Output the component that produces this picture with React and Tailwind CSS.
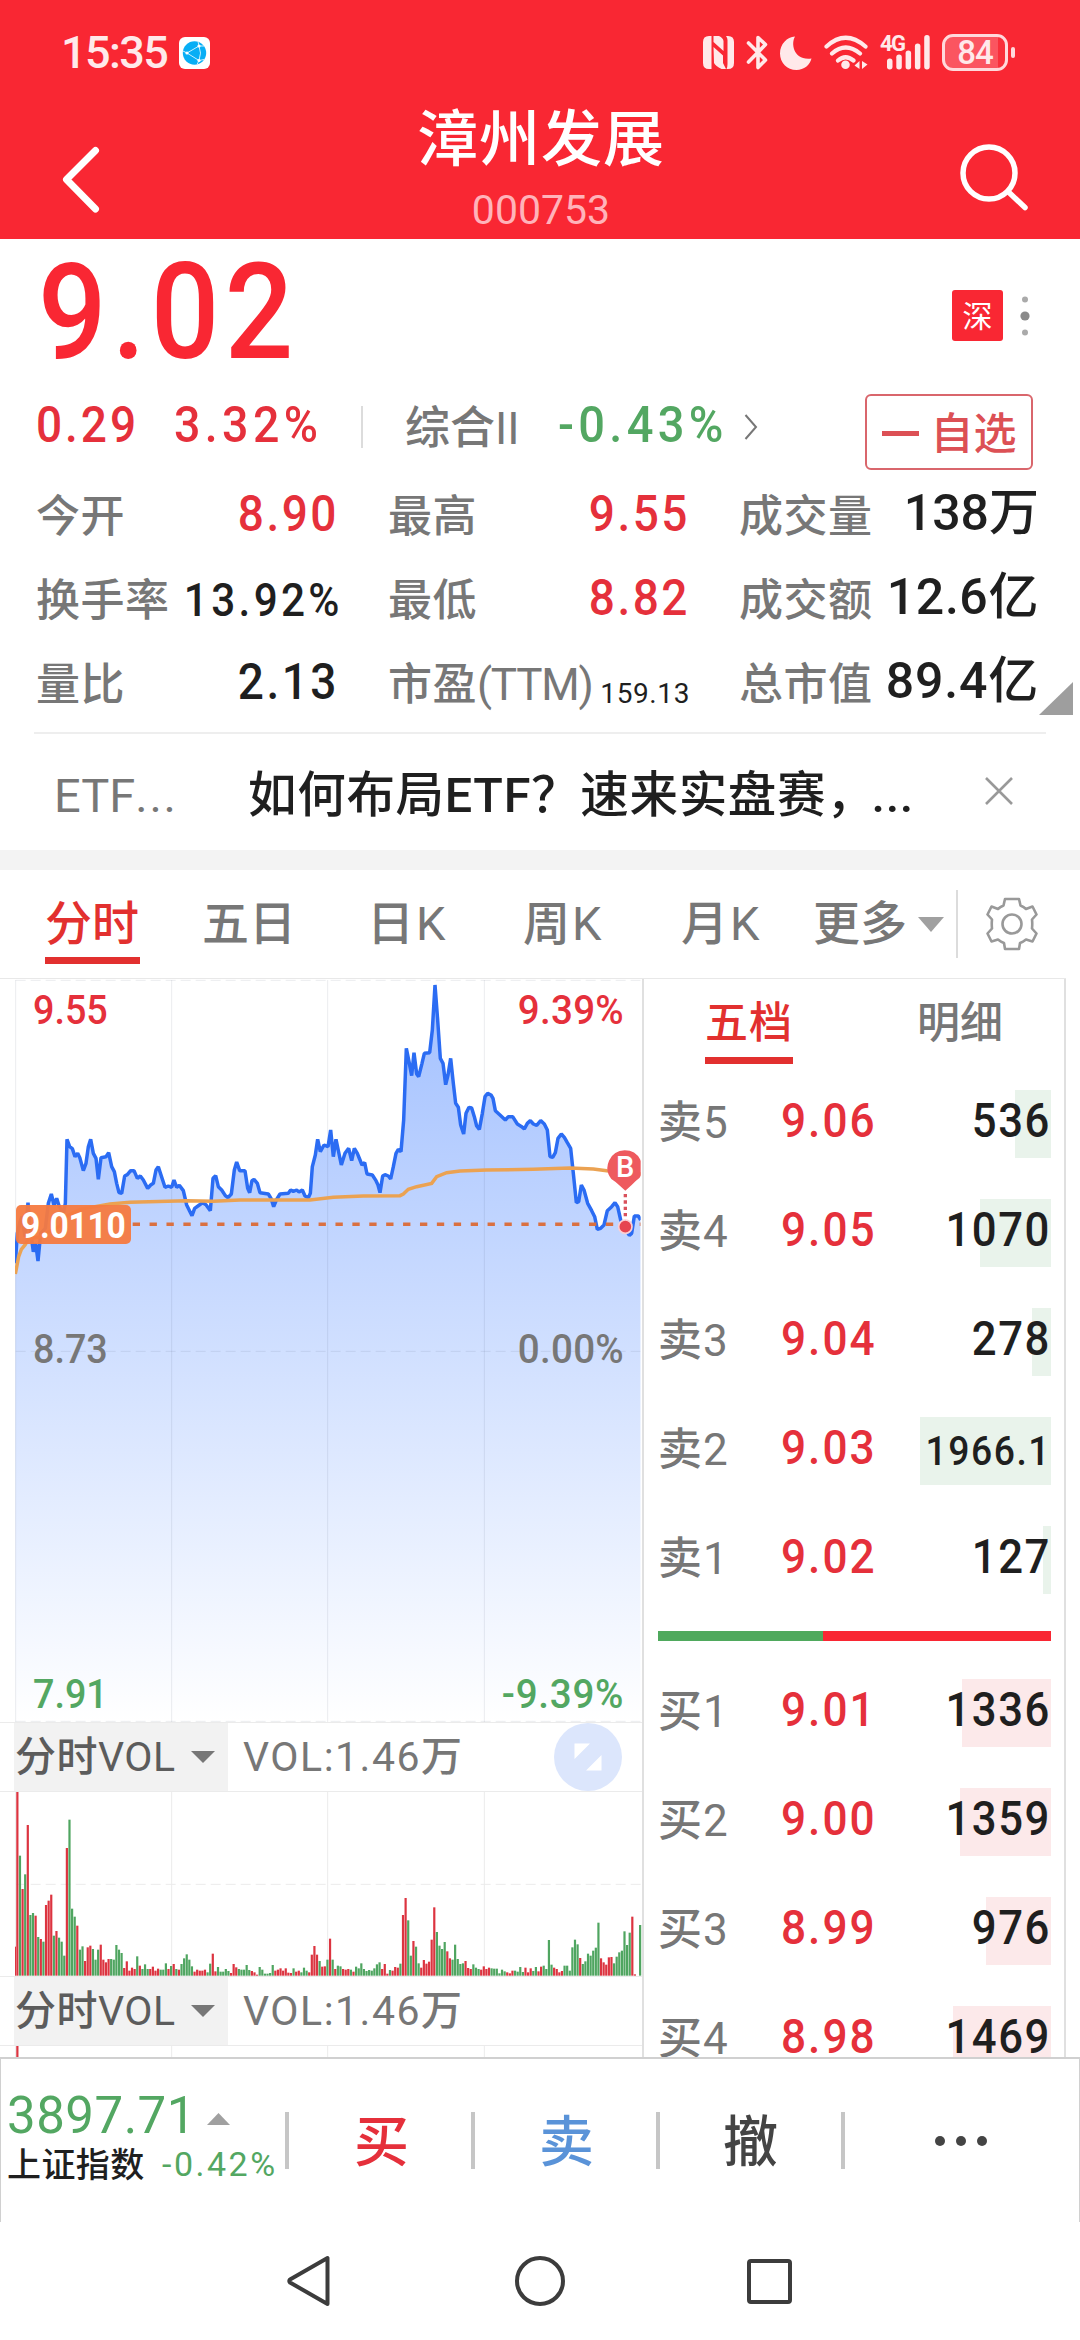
const RED = 'text-[#e5303b]';
const GREEN = 'text-[#53a762]';
const INK = 'text-[#1f1f1f]';

// Chart coordinates: 3 units per pixel.
const PRICE =
  '46,880 52,790 60,755 66,740 75,800 84,698 90,770 100,845 107,820 114,873 122,790 136,775 145,700 154,672 162,705 170,685 178,710 190,730 196,700 201,508 209,530 217,536 225,560 233,550 240,565 250,602 258,580 265,530 272,508 280,550 288,565 295,628 303,563 318,560 326,548 335,590 343,605 350,640 357,668 365,670 374,618 382,614 392,602 402,602 412,625 421,618 430,630 443,655 452,645 460,640 468,600 475,590 483,615 495,652 505,648 515,652 522,630 530,652 538,646 550,662 560,705 570,725 576,737 584,715 598,705 608,698 618,704 631,722 639,625 647,617 655,650 665,660 676,677 684,683 694,672 703,600 710,576 719,602 735,602 743,655 749,668 756,632 762,628 772,640 780,668 805,672 813,685 821,710 829,690 840,672 865,670 872,660 880,664 890,660 897,666 907,660 915,678 925,683 931,670 937,590 946,555 953,508 961,545 972,525 984,530 992,480 1000,560 1008,508 1024,585 1035,550 1046,535 1055,572 1063,535 1072,550 1080,570 1086,585 1094,578 1101,612 1117,615 1128,632 1134,645 1140,668 1148,618 1155,614 1165,618 1172,627 1180,590 1188,550 1195,538 1203,545 1211,450 1219,235 1227,275 1235,317 1242,248 1250,312 1256,320 1266,280 1273,250 1289,248 1297,180 1305,45 1313,150 1321,265 1329,280 1337,344 1344,315 1352,265 1360,340 1367,400 1375,412 1382,465 1391,492 1398,430 1407,412 1415,414 1423,440 1430,468 1438,478 1447,430 1455,380 1463,370 1473,375 1479,385 1486,422 1500,435 1516,450 1525,440 1538,440 1552,462 1565,470 1573,477 1582,460 1591,452 1600,462 1610,466 1622,452 1633,462 1642,480 1650,560 1658,562 1666,548 1674,505 1684,492 1693,502 1702,518 1712,535 1720,610 1729,698 1736,695 1744,645 1752,660 1763,700 1775,722 1784,740 1792,778 1802,775 1812,765 1822,722 1835,710 1845,698 1853,710 1862,750 1872,770 1888,796 1895,790 1903,738 1915,738 1922,750';
const AVERAGE =
  '46,912 56,860 64,838 75,825 85,808 120,800 180,768 200,738 240,718 330,702 390,697 560,692 640,694 720,690 930,690 1000,682 1090,678 1200,677 1210,672 1225,658 1250,650 1295,640 1310,620 1340,608 1380,603 1460,600 1600,598 1710,594 1780,597 1820,602 1922,612';
const VOLUME =
  'r87 r560 g360 r260 g304 r452 g182 g188 r180 g116 r110 g102 r212 r225 r243 g120 r134 g114 g102 g60 r383 g468 g201 g177 r150 g78 g88 r44 r85 r90 g80 g48 g78 r93 r48 r40 r50 g50 g48 g92 g78 g68 r23 r43 r15 r24 r20 g58 r30 g20 g34 g20 r20 r27 r15 r21 g18 g18 g37 r20 g29 r35 g20 r18 g35 g52 g64 g48 g28 r12 r18 r15 r15 r18 g10 g36 r66 r13 g26 g12 g12 g20 g14 r8 r35 r25 g20 g18 g18 g32 g17 r14 r10 r3 g26 g18 g6 g6 g8 g32 r15 r18 r22 r15 r22 r9 r8 g22 r12 r15 g10 g24 g15 r10 r63 r89 r63 g44 r27 r28 g48 r111 g48 r20 g30 g28 r20 r18 r20 g18 r12 g27 g22 g37 g20 g14 g17 g15 g22 g34 g40 r20 r35 r6 g17 r15 r26 r24 g36 r182 r233 g166 g60 r104 g87 g37 r24 r47 r36 r42 r108 r205 g131 g90 g80 g101 r73 r52 g48 g93 g50 g35 g37 r44 r23 r20 g34 g24 g20 r18 r28 r20 r24 g22 g21 g21 g7 g18 g13 r10 r7 r15 g15 g12 g26 g11 r24 r10 r22 g14 g26 r13 r27 g30 g20 g107 g33 r24 r20 r10 r14 g30 g30 g15 g85 g108 g94 r53 g35 g43 g66 g60 g75 g84 g159 r52 r40 r33 r55 r56 g37 g57 g70 g75 g133 g92 g129 r177 r4 r0 g152'.split(' ');

const SELL = [
  ['卖5', '9.06', '536', 36],
  ['卖4', '9.05', '1070', 71],
  ['卖3', '9.04', '278', 19],
  ['卖2', '9.03', '1966.1', 131],
  ['卖1', '9.02', '127', 8],
];
const BUY = [
  ['买1', '9.01', '1336', 89],
  ['买2', '9.00', '1359', 91],
  ['买3', '8.99', '976', 65],
  ['买4', '8.98', '1469', 98],
];

// Medium-weight Chinese characters followed by regular-weight Latin ones.
function Mix({ zh, latin, latinClass = '' }) {
  return (
    <>
      <span className="font-medium">{zh}</span>
      {latin && <span className={`font-normal ${latinClass}`}>{latin}</span>}
    </>
  );
}

function StatusBar() {
  return (
    <div className="flex h-[105px] items-center pl-[61px] text-[#ffe9ea]">
      <span className="w-[118px] text-[45px] leading-[50px] font-medium tracking-[-1.6px]">15:35</span>
      <svg width="31" height="32" viewBox="0 0 31 32">
        <rect width="31" height="32" rx="6" fill="#fff" />
        <circle cx="15.5" cy="16" r="11.7" fill="#08aef5" />
        <path d="M19 4.5 20 9 8 16 20 23.5 18 27.5M20 9q3 7 0 14.500M20 9l5 0M20 23.500l5-1M8 16l-4-2" fill="none" stroke="#c8f0ff" strokeWidth="1" />
        <circle cx="20" cy="9" r="1.600" fill="#fff" />
        <circle cx="8" cy="16" r="1.600" fill="#fff" />
        <circle cx="20" cy="23.500" r="1.600" fill="#fff" />
      </svg>
      <div className="ml-[493px] flex items-center">
        <svg width="31" height="33" viewBox="0 0 31 33" fill="currentColor">
          <path d="M6 0h2.500v33H6Q0 33 0 27V6Q0 0 6 0zM10.500 0H16q4 2 4.500 5v10L10.500 6zM25 0q6 0 6 6v21q0 6-6 6h-1.500q1-2 1-5V4q0-2-1.500-4zM10.500 11 20 19.500 20 27 23 33h-4.500q-6-3-7.500-6z" />
        </svg>
        <svg className="ml-3" width="22" height="35" viewBox="0 0 22 35" fill="none" stroke="currentColor" strokeWidth="3.600" strokeLinejoin="round" strokeLinecap="round">
          <path d="M2.500 8 19.500 25l-7.500 7.500V2.500L19.500 9.500 2.500 27" />
        </svg>
        <svg className="ml-3" width="32" height="34" viewBox="0 0 32 34" fill="currentColor">
          <path d="M15 .5C10.500 8 14 25 31.500 22.500 30 29 24 34 16.500 34 7 34 0 26.500 0 17.500 0 8 7 1 15 .5z" />
        </svg>
        <svg className="ml-3" width="44" height="35" viewBox="0 0 44 35" fill="none" stroke="currentColor" strokeWidth="4.200" strokeLinecap="round">
          <path d="M2.500 11.500Q21.500-6 41.500 11.500M8 18.500Q21.500 6.500 36 18.500M14 25.500Q21.500 19 29.500 25.500" />
          <circle cx="21.500" cy="29.700" r="2.800" fill="currentColor" strokeWidth="3" />
          <path d="M35.500 26v8l-5-3.500zM38 26v8l5.500-4.500z" fill="currentColor" stroke="none" />
        </svg>
        <div className="relative ml-3 h-[35px] w-[51px]">
          <span className="absolute top-[-2px] left-0 text-[22px] leading-[22px] font-bold tracking-[-1.5px]">4G</span>
          <svg width="51" height="35" viewBox="0 0 51 35" fill="currentColor">
            <rect x="7" y="23.500" width="5.500" height="11" rx="2.700" />
            <rect x="16.300" y="19.500" width="5.500" height="15" rx="2.700" />
            <rect x="25.600" y="15.500" width="5.500" height="19" rx="2.700" />
            <rect x="34.900" y="8.500" width="5.500" height="26" rx="2.700" />
            <rect x="44.200" y="0" width="5.500" height="34.500" rx="2.700" />
          </svg>
        </div>
        <div className="ml-[11px] flex h-[37px] w-[66px] items-center justify-center rounded-[11px] border-[3px] border-[#ffd9dc] bg-linear-to-r from-[#fb5560] from-88% to-[#f92f3b] to-88% text-[33px] leading-8 font-medium tracking-[-1px]">
          84
        </div>
        <div className="ml-[3px] h-[11px] w-[4px] rounded-sm bg-[#ffd9dc]" />
      </div>
    </div>
  );
}

function Header() {
  return (
    <header className="h-[239px] bg-[#f92733]">
      <StatusBar />
      <div className="flex h-[134px] justify-between pr-[52px] pl-[62px]">
        <svg className="mt-[41px]" width="38" height="68" viewBox="0 0 38 68" fill="none" stroke="#fff" strokeWidth="7" strokeLinecap="round" strokeLinejoin="round">
          <path d="M33.500 4.500 4.500 33.500 33.500 63" />
        </svg>
        <div className="flex flex-col items-center pl-[22px] text-white">
          <h1 className="mt-[3px] text-[61px] leading-[64px] font-medium tracking-[1px]">漳州发展</h1>
          <p className="mt-[14px] text-[41px] leading-[48px] text-[#ffb3ba]">000753</p>
        </div>
        <svg className="mt-[37px]" width="68" height="70" viewBox="0 0 68 70" fill="none" stroke="#fff" strokeWidth="5.500" strokeLinecap="round">
          <circle cx="29" cy="31" r="26" />
          <path d="M48 49.500 65 65.500" />
        </svg>
      </div>
    </header>
  );
}

const DIGITS = 'text-[50px] tracking-[2.7px] origin-right scale-x-[.92] -mr-[3px]';

function Stat({ zh, latin, value, color = INK, size = DIGITS }) {
  return (
    <div className="flex h-[84px] items-center justify-between whitespace-nowrap">
      <span className="pt-[5px] text-[44px] leading-[50px] text-[#777] tracking-[0.5px]">
        <Mix zh={zh} latin={latin} latinClass="tracking-[-1.2px]" />
      </span>
      <span className={`leading-[60px] font-medium ${size} ${color}`}>{value}</span>
    </div>
  );
}

function Quote() {
  return (
    <section className="h-[611px]">
      <div className="flex h-[143px] items-center pr-[50px] pl-[38px]">
        <span className="inline-block origin-left scale-x-[.9] pt-[4px] text-[134px] leading-[143px] font-medium tracking-[6px] text-[#f92733]">9.02</span>
        <div className="mt-[10px] ml-auto flex h-[51px] w-[51px] items-center justify-center rounded-[3px] bg-[#f92733] pt-[2px] text-[30px] leading-8 text-white">深</div>
        <svg className="mt-[10px] ml-[17px]" width="10" height="42" viewBox="0 0 10 42" fill="#aaa">
          <circle cx="5" cy="4.500" r="3" />
          <circle cx="5" cy="21" r="4.600" fill="#8a8a8a" />
          <circle cx="5" cy="37.500" r="3" />
        </svg>
      </div>
      <div className="flex h-[90px] items-center whitespace-nowrap pr-[47px] pl-[36px]">
        <span className={`w-[138px] origin-left scale-x-[.92] text-[50px] leading-[60px] font-medium tracking-[3.2px] -mt-[4px] ${RED}`}>0.29</span>
        <span className={`w-[187px] origin-left scale-x-[.93] text-[50px] leading-[60px] font-medium tracking-[4.7px] -mt-[4px] ${RED}`}>3.32%</span>
        <i className="h-[42px] w-[2px] bg-[#dcdcdc]" />
        <span className="ml-[42px] w-[153px] pt-[3px] text-[45px] leading-[50px] text-[#777]"><Mix zh="综合" latin="II" /></span>
        <span className={`w-[186px] origin-left scale-x-[.94] text-[50px] leading-[60px] font-medium tracking-[4.6px] -mt-[4px] ${GREEN}`}>-0.43%</span>
        <svg width="14" height="28" viewBox="0 0 14 28" fill="none" stroke="#777" strokeWidth="2">
          <path d="M1.500 2 12 14 1.500 26" />
        </svg>
        <div className="mt-[10px] ml-auto flex h-[76px] w-[168px] items-center justify-center rounded-md border-2 border-[#d9666c] pt-[3px] text-[43px] leading-[50px] font-medium text-[#dc5055]">
          <i className="mr-[12px] h-[5px] w-[37px] bg-[#dc5055]" />
          自选
        </div>
      </div>
      <div className="relative grid grid-cols-[300px_299px_300px] gap-x-[52px] pl-[36px]">
        <Stat zh="今开" value="8.90" color={RED} />
        <Stat zh="最高" value="9.55" color={RED} />
        <Stat zh="成交量" value="138万" size="text-[50px] -mt-[3px]" />
        <Stat zh="换手率" value="13.92%" size="text-[46px] tracking-[3.6px] origin-right scale-x-[.92] -mr-[2px] pt-[3px]" />
        <Stat zh="最低" value="8.82" color={RED} />
        <Stat zh="成交额" value="12.6亿" size="text-[50px] tracking-[0.6px] -mt-[3px]" />
        <Stat zh="量比" value="2.13" />
        <Stat zh="市盈" latin="(TTM)" value="159.13" size="text-[28px] pt-[24px] tracking-[0.6px] -mr-[3px] !font-normal" />
        <Stat zh="总市值" value="89.4亿" size="text-[50px] tracking-[0.8px] -mt-[3px]" />
        <svg className="absolute top-[210px] left-[1039px]" width="34" height="33" viewBox="0 0 34 33">
          <path d="M34 0V33H0z" fill="#9e9e9e" />
        </svg>
      </div>
      <div className="mx-[34px] mt-2 h-[2px] bg-[#eee]" />
      <div className="flex h-[116px] items-center whitespace-nowrap pt-[8px] pl-[54px]">
        <span className="w-[194px] text-[47px] leading-[60px] text-[#777]">ETF<span className="tracking-[1.8px]">...</span></span>
        <span className={`w-[737px] text-[48.5px] leading-[60px] font-medium tracking-[0.7px] ${INK}`}>如何布局ETF？速来实盘赛，<span className="-ml-1">...</span></span>
        <svg className="-mt-[11px]" width="28" height="28" viewBox="0 0 28 28" stroke="#999" strokeWidth="2.600">
          <path d="M1 1 27 27M27 1 1 27" />
        </svg>
      </div>
    </section>
  );
}

function Tabs() {
  return (
    <nav className="flex h-[108px] items-center whitespace-nowrap pl-[45px] text-[47px] leading-[60px] text-[#777]">
      <div className="w-[157px] pt-[10px] font-medium text-[#e2302f]">
        <div>分时</div>
        <i className="mt-[3px] block h-[7px] w-[95px] bg-[#e2302f]" />
      </div>
      <span className="w-[165px]"><Mix zh="五日" /></span>
      <span className="w-[156px]"><Mix zh="日" latin="K" latinClass="ml-[2px]" /></span>
      <span className="w-[158px]"><Mix zh="周" latin="K" latinClass="ml-[2px]" /></span>
      <span className="w-[132px]"><Mix zh="月" latin="K" latinClass="ml-[2px]" /></span>
      <span className="w-[105px]"><Mix zh="更多" /></span>
      <svg width="26" height="15" viewBox="0 0 26 15"><path d="M0 0H26L13 15z" fill="#a0a0a0" /></svg>
      <i className="ml-[12px] h-[68px] w-[2px] bg-[#dcdcdc]" />
      <svg className="ml-[28px]" width="52" height="54" viewBox="-26 -27 52 54" fill="none" stroke="#999" strokeWidth="2.600" strokeLinejoin="round">
        <path d="M-7-25H7L8.500-18.500Q12-17 14-15L20.500-17.500 24.500-9.500 20-4.500Q20.500 0 20 4.500L24.500 9.500 20.500 17.500 14 15.500Q11 18 8 19L7 25H-7L-8 19Q-11 18-14 15.500L-20.500 17.500-24.500 9.500-20 4.500Q-20.500 0-20-4.500L-24.500-9.500-20.500-17.500-14-15Q-12-17-8.500-18.500z" />
        <circle r="9.500" />
      </svg>
    </nav>
  );
}

function PriceChart() {
  return (
    <div className="relative h-[744px] font-medium text-[41px] leading-[41px]">
      <svg className="block" width="642" height="744" viewBox="0 24 1926 2232">
        <defs>
          <linearGradient id="area" gradientUnits="userSpaceOnUse" x1="0" y1="30" x2="0" y2="2256">
            <stop offset="0" stopColor="#a2c0ff" />
            <stop offset="1" stopColor="#ffffff" />
          </linearGradient>
          <clipPath id="plot"><rect x="45" y="24" width="1877" height="2232" /></clipPath>
        </defs>
        <g clipPath="url(#plot)">
          <polygon points={`46,2256 ${PRICE} 1922,2256`} fill="url(#area)" />
          <g stroke="#20304a" strokeOpacity=".09" strokeWidth="3">
            <path d="M47 30V2256M515 30V2256M983 30V2256M1453 30V2256" />
            <path d="M47 31H1922M47 1144H1922M47 2254H1922" strokeDasharray="30 15" />
          </g>
          <polyline points={PRICE} fill="none" stroke="#2b6cf3" strokeWidth="10.500" strokeLinejoin="bevel" />
          <polyline points={AVERAGE} fill="none" stroke="#eba252" strokeWidth="10.500" />
          <path d="M398 763H1922" stroke="#da7040" strokeWidth="10.500" strokeDasharray="22 28.700" />
          <path d="M1876 672V745" stroke="#d9525c" strokeWidth="10" strokeDasharray="10 9" />
          <circle cx="1876" cy="770" r="20" fill="#e64550" stroke="#fbd0d4" strokeWidth="5" />
          <path d="M1874 541a53 53 0 0 1 44 83Q1905 634 1895 645L1876 662 1857 645Q1845 634 1834 627A53 53 0 0 1 1874 541z" fill="#ee5a5e" />
        </g>
      </svg>
      <span className={`absolute top-[12px] left-[33px] origin-left scale-x-[.92] ${RED}`}>9.55</span>
      <span className={`absolute top-[12px] right-[18px] origin-right scale-x-[.94] tracking-[0.3px] ${RED}`}>9.39%</span>
      <span className="absolute top-[351px] left-[33px] origin-left scale-x-[.92] text-[#777]">8.73</span>
      <span className="absolute top-[351px] right-[18px] origin-right scale-x-[.94] tracking-[0.3px] text-[#777]">0.00%</span>
      <span className={`absolute top-[696px] left-[33px] origin-left scale-x-[.92] ${GREEN}`}>7.91</span>
      <span className={`absolute top-[696px] right-[18px] origin-right scale-x-[.94] tracking-[0.8px] ${GREEN}`}>-9.39%</span>
      <div className="absolute top-[227px] left-[16px] h-[39px] w-[115px] rounded-[5px] bg-[#f67a40]/95 pl-[5px] text-[36.5px] leading-[41px] font-bold text-white">
        <span className="inline-block origin-left scale-x-[.92] tracking-[-0.3px]">9.0110</span>
      </div>
      <span className="absolute top-[175px] left-[616px] text-[29px] leading-[29px] text-white">B</span>
    </div>
  );
}

function VolumeHeader({ expand }) {
  return (
    <div className="flex h-[70px] items-center border-y border-[#ebebeb] pl-[14px] text-[41px] whitespace-nowrap">
      <div className="flex h-full w-[214px] items-center bg-[#f2f2f2] pl-[1px] text-[#5c5c5c]">
        <span className="w-[176px] text-[41px] leading-[50px] tracking-[0.5px]"><Mix zh="分时" latin="VOL" /></span>
        <svg width="24" height="12" viewBox="0 0 24 12"><path d="M0 0H24L12 12z" fill="#777" /></svg>
      </div>
      <span className="ml-[15px] w-[311px] leading-[50px] tracking-[1.5px] text-[#777]">VOL:1.46<span className="font-medium">万</span></span>
      {expand && (
        <svg width="68" height="68" viewBox="0 0 68 68">
          <circle cx="34" cy="34" r="34" fill="#dce6fc" />
          <path d="M20.500 20.500H36L20.500 36zM47.500 32V47.500H32z" fill="#fff" />
        </svg>
      )}
    </div>
  );
}

function VolumeChart() {
  return (
    <svg className="block" width="642" height="184" viewBox="0 0 1926 552">
      <g stroke="#ebebeb" strokeWidth="3">
        <path d="M47 0V552M515 0V552M983 0V552M1453 0V552" />
        <path d="M47 277H1922" strokeDasharray="30 15" />
      </g>
      {VOLUME.map((v, i) => {
        const h = Number(v.slice(1));
        const x = 41 + i * 7.817;
        return (
          <rect key={i} x={Math.max(x, 45)} y={551 - h} width={i === 0 ? 3 : 6.600} height={h} fill={v[0] === 'r' ? '#dc3440' : '#4fa560'} />
        );
      })}
    </svg>
  );
}

function BookRow({ row, tint }) {
  const [label, price, amount, width] = row;
  return (
    <div className="flex h-[109px] items-center whitespace-nowrap font-medium">
      <span className="-mt-[2px] w-[123px] text-[44px] leading-[50px] text-[#777]"><Mix zh={label[0]} latin={label[1]} latinClass="ml-px" /></span>
      <span className={`text-[48px] leading-[50px] origin-left scale-x-[.92] tracking-[2.200px] -mt-[5px] ${RED}`}>{price}</span>
      <div className="relative ml-auto flex h-[68px] w-[131px] items-center justify-end">
        <i className={`absolute top-0 right-0 h-full ${tint}`} style={{ width }} />
        <span className={`relative origin-right scale-x-[.91] leading-[50px] ${INK} ${amount.length > 5 ? 'text-[41px] tracking-[1.700px]' : 'text-[48px] -mt-[5px] tracking-[1.700px]'}`}>{amount}</span>
      </div>
    </div>
  );
}

function OrderBook() {
  return (
    <aside className="w-[424px] border-x-2 border-[#e0e0e0] pr-[13px] pl-[14px]">
      <div className="flex h-[90px] pt-[14px] text-[43px] leading-[60px] font-medium">
        <div className="ml-[47px] w-[88px] tracking-[1px] text-[#e2302f]">
          五档
          <i className="mt-[4px] block h-[7px] bg-[#e2302f]" />
        </div>
        <span className="ml-[124px] text-[#777]">明细</span>
      </div>
      {SELL.map((row) => <BookRow key={row[0]} row={row} tint="bg-[#e9f3eb]" />)}
      <div className="mt-[17px] mb-[17px] flex h-[10px] bg-[#f92733]">
        <i className="w-[165px] bg-[#4fa95d]" />
      </div>
      {BUY.map((row) => <BookRow key={row[0]} row={row} tint="bg-[#fce9ea]" />)}
    </aside>
  );
}

function TradeBar() {
  return (
    <footer className="flex h-[165px] border border-t-2 border-b-0 border-[#d0d0d0] whitespace-nowrap">
      <div className="w-[284px] pt-[32px] pl-[6px]">
        <div className="flex items-center">
          <span className={`w-[200px] text-[51px] leading-[50px] tracking-[0.5px] ${GREEN}`}>3897.71</span>
          <svg className="mt-[6px]" width="23" height="12" viewBox="0 0 23 12"><path d="M0 12H23L11.500 0z" fill="#a0a0a0" /></svg>
        </div>
        <div className="mt-[4px] flex items-center text-[34px] leading-[40px]">
          <span className={`w-[155px] font-medium tracking-[0.4px] ${INK}`}>上证指数</span>
          <span className={`-mt-[2px] tracking-[2.500px] ${GREEN}`}>-0.42%</span>
        </div>
      </div>
      <div className="flex h-[165px] flex-1 text-[55px] leading-[60px] font-medium">
        <div className="flex w-[186px] items-center pb-[2px]">
          <i className="h-[57px] w-[4px] bg-[#c6c6c6]" />
          <span className="ml-[65px] mt-[3px] text-[#e5303b]">买</span>
        </div>
        <div className="flex w-[185px] items-center pb-[2px]">
          <i className="h-[57px] w-[4px] bg-[#c6c6c6]" />
          <span className="ml-[64px] mt-[3px] text-[#5a93d8]">卖</span>
        </div>
        <div className="flex w-[185px] items-center pb-[2px]">
          <i className="h-[57px] w-[4px] bg-[#c6c6c6]" />
          <span className="ml-[63px] mt-[3px] text-[#444]">撤</span>
        </div>
        <div className="flex items-center pb-[2px]">
          <i className="h-[57px] w-[4px] bg-[#c6c6c6]" />
          <div className="ml-[90px] flex gap-[11px]">
            <i className="h-[10px] w-[10px] rounded-full bg-[#444]" />
            <i className="h-[10px] w-[10px] rounded-full bg-[#444]" />
            <i className="h-[10px] w-[10px] rounded-full bg-[#444]" />
          </div>
        </div>
      </div>
    </footer>
  );
}

function NavBar() {
  return (
    <div className="flex h-[118px] items-center pl-[286px]">
      <svg width="44" height="52" viewBox="0 0 44 52" fill="none" stroke="#3c3c3c" strokeWidth="4" strokeLinejoin="round">
        <path d="M41.500 3V49L4 27.500Q2.500 26 4 24.500z" />
      </svg>
      <i className="ml-[185px] h-[50px] w-[50px] rounded-full border-4 border-[#3c3c3c]" />
      <i className="ml-[182px] h-[45px] w-[45px] rounded-[4px] border-4 border-[#3c3c3c]" />
    </div>
  );
}

export default function App() {
  return (
    <div className="h-[2340px] w-[1080px] overflow-hidden bg-white font-['Roboto','Noto_Sans_CJK_SC',sans-serif]">
      <Header />
      <Quote />
      <div className="h-[20px] bg-[#f3f3f3]" />
      <Tabs />
      <main className="flex h-[1079px] overflow-hidden">
        <div className="flex w-[1066px] border-t border-[#e8e8e8]">
          <div className="-mt-px w-[642px]">
            <PriceChart />
            <VolumeHeader expand />
            <VolumeChart />
            <VolumeHeader />
            <VolumeChart />
          </div>
          <OrderBook />
        </div>
      </main>
      <TradeBar />
      <NavBar />
    </div>
  );
}
